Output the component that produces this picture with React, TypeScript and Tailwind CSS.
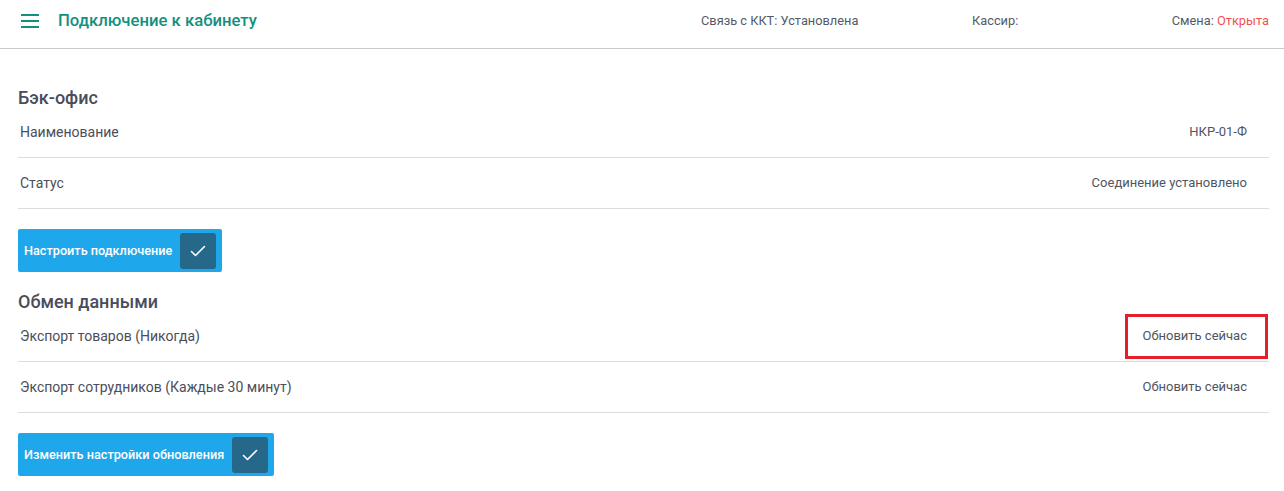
import React from 'react';

const font = { fontFamily: 'Roboto, "Noto Sans", sans-serif' };

function CheckBox() {
  return (
    <span className="ml-2 flex h-[36px] w-[36px] items-center justify-center rounded-[3px] bg-[#26688a]">
      <svg width="16" height="12" viewBox="0 0 16 12" fill="none">
        <path d="M1.5 6.5 L5.5 10.5 L14.5 1.5" stroke="#ffffff" strokeWidth="1.6" strokeLinecap="round" strokeLinejoin="round" />
      </svg>
    </span>
  );
}

function ActionButton({ label }: { label: string }) {
  return (
    <button className="mt-5 flex h-[43px] items-center self-start rounded-[2px] bg-[#1ea7ea] pl-[6px] pr-[6px] text-[12.7px] font-medium text-white">
      {label}
      <CheckBox />
    </button>
  );
}

function Row({ left, right, marked }: { left: string; right: string; marked?: boolean }) {
  return (
    <div className="relative flex h-[51px] items-center justify-between border-b border-[#dcdcdc] pl-[2px] pr-[22px]">
      <span className="text-[14px] text-[#4b4e5a]">{left}</span>
      <span className="text-[13px] text-[#505462]">{right}</span>
      {marked && (
        <span className="absolute right-[1px] top-[3px] h-[45px] w-[143px] border-[3px] border-[#e3202a]" />
      )}
    </div>
  );
}

export default function App() {
  return (
    <div className="min-h-screen bg-white" style={font}>
      {/* Top bar */}
      <header className="flex h-[49px] items-center border-b border-[#c9c9c9] pl-[21px] pr-[15px]">
        <svg width="18" height="14" viewBox="0 0 18 14" className="mt-[-6px]">
          <rect x="0" y="0" width="18" height="2" fill="#13917f" />
          <rect x="0" y="6" width="18" height="2" fill="#13917f" />
          <rect x="0" y="12" width="18" height="2" fill="#13917f" />
        </svg>
        <h1 className="ml-[19px] mt-[-6px] text-[16.7px] font-medium text-[#13917f]">Подключение к кабинету</h1>
        <div className="ml-auto mt-[-6px] flex items-center text-[12.8px] text-[#555a66]">
          <span className="w-[271px]">Связь с ККТ: Установлена</span>
          <span className="w-[140px]">Кассир:</span>
          <span className="w-[157px] text-right">
            Смена: <span className="text-[#ef5350]">Открыта</span>
          </span>
        </div>
      </header>

      <main className="flex flex-col pl-[18px] pr-[15px]">
        <h2 className="mt-[39px] h-[19px] text-[18px] leading-[20px] font-medium text-[#494d5b]">Бэк-офис</h2>
        <Row left="Наименование" right="НКР-01-Ф" />
        <Row left="Статус" right="Соединение установлено" />
        <ActionButton label="Настроить подключение" />

        <h2 className="mt-[20px] h-[19px] text-[18px] leading-[20px] font-medium text-[#494d5b]">Обмен данными</h2>
        <Row left="Экспорт товаров (Никогда)" right="Обновить сейчас" marked />
        <Row left="Экспорт сотрудников (Каждые 30 минут)" right="Обновить сейчас" />
        <ActionButton label="Изменить настройки обновления" />
      </main>
    </div>
  );
}
